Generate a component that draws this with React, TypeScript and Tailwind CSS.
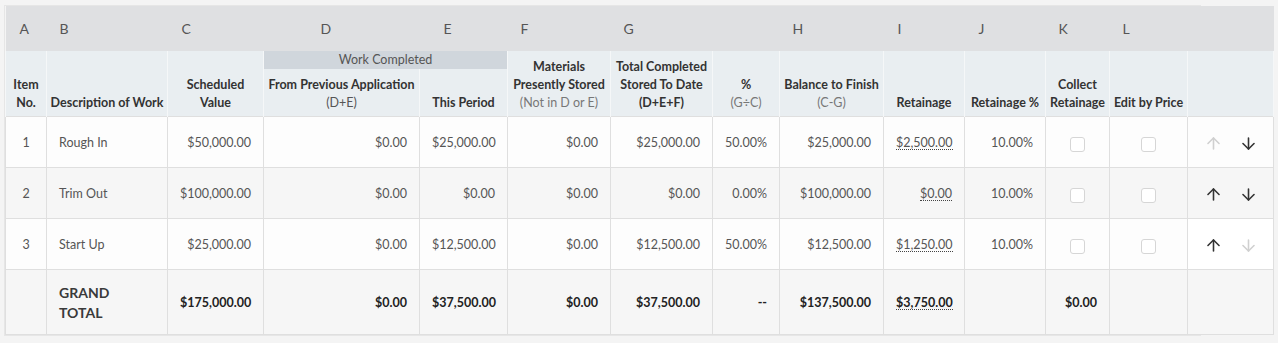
import React from "react";
import { ArrowUp, ArrowDown } from "lucide-react";

const widths = [41, 121, 96, 156, 88, 103, 102, 67, 104, 81, 81, 64, 78, 86];

type Row = {
  no: string;
  desc: string;
  sched: string;
  prev: string;
  period: string;
  mat: string;
  total: string;
  pct: string;
  bal: string;
  ret: string;
  retPct: string;
  upDisabled: boolean;
  downDisabled: boolean;
};

const rows: Row[] = [
  { no: "1", desc: "Rough In", sched: "$50,000.00", prev: "$0.00", period: "$25,000.00", mat: "$0.00", total: "$25,000.00", pct: "50.00%", bal: "$25,000.00", ret: "$2,500.00", retPct: "10.00%", upDisabled: true, downDisabled: false },
  { no: "2", desc: "Trim Out", sched: "$100,000.00", prev: "$0.00", period: "$0.00", mat: "$0.00", total: "$0.00", pct: "0.00%", bal: "$100,000.00", ret: "$0.00", retPct: "10.00%", upDisabled: false, downDisabled: false },
  { no: "3", desc: "Start Up", sched: "$25,000.00", prev: "$0.00", period: "$12,500.00", mat: "$0.00", total: "$12,500.00", pct: "50.00%", bal: "$12,500.00", ret: "$1,250.00", retPct: "10.00%", upDisabled: false, downDisabled: true },
];

function Checkbox() {
  return <span className="inline-block w-[15px] h-[15px] rounded-[3px] border border-[#d6d6d6] bg-white align-middle mt-[3px]" />;
}

export default function App() {
  const td = "border border-[#dfdfdf] text-[12.5px] text-[#555] h-[51px] px-[12px] pt-[3px] align-middle";
  const th = "border-x border-[#f5f7f8] text-[12.5px] font-bold text-[#333] leading-[18px] text-center align-bottom pb-[4px] px-[2px]";
  return (
    <div className="min-h-screen bg-[#f4f4f4] pt-[5px] pl-[4px] font-['Lato',sans-serif]">
      <div className="w-[1197px] border border-[#e6e6e6]">
        <table className="w-[1268px] table-fixed border-collapse">
          <colgroup>
            {widths.map((w, i) => (
              <col key={i} style={{ width: w }} />
            ))}
          </colgroup>
          <thead>
            <tr className="bg-[#dfe0e2] h-[45px] text-[14px] text-[#555] text-left">
              <td className="pl-[14px]">A</td>
              <td className="pl-[13px]">B</td>
              <td className="pl-[14px]">C</td>
              <td className="pl-[57px]">D</td>
              <td className="pl-[24px]">E</td>
              <td className="pl-[13px]">F</td>
              <td className="pl-[13px]">G</td>
              <td></td>
              <td className="pl-[13px]">H</td>
              <td className="pl-[14px]">I</td>
              <td className="pl-[14px]">J</td>
              <td className="pl-[13px]">K</td>
              <td className="pl-[13px]">L</td>
              <td></td>
            </tr>
            <tr className="bg-[#e9eef1]">
              <th rowSpan={2} className={th}>Item<br />No.</th>
              <th rowSpan={2} className={th}>Description of Work</th>
              <th rowSpan={2} className={th}>Scheduled<br />Value</th>
              <th colSpan={2} className="h-[18px] bg-[#d0d6dc] text-[12.5px] font-normal text-[#555] text-center leading-[18px] p-0">Work Completed</th>
              <th rowSpan={2} className={th}>
                Materials<br />Presently Stored<br />
                <span className="font-normal text-[#777]">(Not in D or E)</span>
              </th>
              <th rowSpan={2} className={th}>
                Total Completed<br />Stored To Date<br />(D+E+F)
              </th>
              <th rowSpan={2} className={th}>
                %<br />
                <span className="font-normal text-[#777]">(G÷C)</span>
              </th>
              <th rowSpan={2} className={th}>
                Balance to Finish<br />
                <span className="font-normal text-[#777]">(C-G)</span>
              </th>
              <th rowSpan={2} className={th}>Retainage</th>
              <th rowSpan={2} className={th}>Retainage %</th>
              <th rowSpan={2} className={th}>Collect<br />Retainage</th>
              <th rowSpan={2} className={th}>Edit by Price</th>
              <th rowSpan={2} className={th}></th>
            </tr>
            <tr className="bg-[#e9eef1] h-[47px]">
              <th className={th}>
                From Previous Application<br />
                <span className="font-normal text-[#555]">(D+E)</span>
              </th>
              <th className={th}>This Period</th>
            </tr>
          </thead>
          <tbody>
            {rows.map((r, i) => (
              <tr key={r.no} className={i % 2 === 1 ? "bg-[#f6f6f6]" : "bg-[#fdfdfd]"}>
                <td className={`${td} text-center`}>{r.no}</td>
                <td className={`${td} text-left`}>{r.desc}</td>
                <td className={`${td} text-right`}>{r.sched}</td>
                <td className={`${td} text-right`}>{r.prev}</td>
                <td className={`${td} text-right`}>{r.period}</td>
                <td className={`${td} text-right`}>{r.mat}</td>
                <td className={`${td} text-right`}>{r.total}</td>
                <td className={`${td} text-right`}>{r.pct}</td>
                <td className={`${td} text-right`}>{r.bal}</td>
                <td className={`${td} text-right`}>
                  <span className="border-b border-dotted border-[#444] leading-[13px] inline-block">{r.ret}</span>
                </td>
                <td className={`${td} text-right`}>{r.retPct}</td>
                <td className={`${td} text-center`}><Checkbox /></td>
                <td className={`${td} text-center`}><Checkbox /></td>
                <td className={`${td} text-center ${i === 2 ? "bg-white" : ""}`}>
                  <div className="flex items-center justify-center gap-[16px]">
                    <ArrowUp size={19} strokeWidth={2} className={r.upDisabled ? "text-[#d0d0d0]" : "text-[#333]"} />
                    <ArrowDown size={19} strokeWidth={2} className={r.downDisabled ? "text-[#d0d0d0]" : "text-[#333]"} />
                  </div>
                </td>
              </tr>
            ))}
            <tr className="bg-[#f6f6f6] font-bold">
              <td className="border border-[#dfdfdf] h-[65px]"></td>
              <td className="border border-[#dfdfdf] px-[12px] pt-[3px] text-[14px] leading-[20px] text-[#3a3a3a] text-left">GRAND<br />TOTAL</td>
              <td className={`${td} text-right !text-[#222]`}>$175,000.00</td>
              <td className={`${td} text-right !text-[#222]`}>$0.00</td>
              <td className={`${td} text-right !text-[#222]`}>$37,500.00</td>
              <td className={`${td} text-right !text-[#222]`}>$0.00</td>
              <td className={`${td} text-right !text-[#222]`}>$37,500.00</td>
              <td className={`${td} text-right !text-[#222]`}>--</td>
              <td className={`${td} text-right !text-[#222]`}>$137,500.00</td>
              <td className={`${td} text-right !text-[#222]`}>
                <span className="border-b border-dotted border-[#444] leading-[13px] inline-block">$3,750.00</span>
              </td>
              <td className={td}></td>
              <td className={`${td} text-right !text-[#222]`}>$0.00</td>
              <td className={td}></td>
              <td className={td}></td>
            </tr>
          </tbody>
        </table>
      </div>
    </div>
  );
}
